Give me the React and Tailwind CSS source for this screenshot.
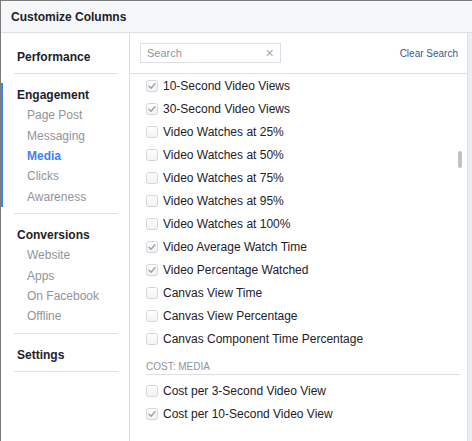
const sections = [
  { title: 'Performance', items: [] },
  { title: 'Engagement', items: ['Page Post', 'Messaging', 'Media', 'Clicks', 'Awareness'], active: true },
  { title: 'Conversions', items: ['Website', 'Apps', 'On Facebook', 'Offline'] },
  { title: 'Settings', items: [] },
];

const columns = [
  { label: '10-Second Video Views', checked: true },
  { label: '30-Second Video Views', checked: true },
  { label: 'Video Watches at 25%', checked: false },
  { label: 'Video Watches at 50%', checked: false },
  { label: 'Video Watches at 75%', checked: false },
  { label: 'Video Watches at 95%', checked: false },
  { label: 'Video Watches at 100%', checked: false },
  { label: 'Video Average Watch Time', checked: true },
  { label: 'Video Percentage Watched', checked: true },
  { label: 'Canvas View Time', checked: false },
  { label: 'Canvas View Percentage', checked: false },
  { label: 'Canvas Component Time Percentage', checked: false },
];

const costColumns = [
  { label: 'Cost per 3-Second Video View', checked: false },
  { label: 'Cost per 10-Second Video View', checked: true },
];

const Checkbox = ({ checked }) => (
  <svg width="12" height="12" viewBox="0 0 12 12" className="shrink-0">
    <defs>
      <linearGradient id="cbg" x1="0" y1="0" x2="0" y2="1">
        <stop offset="0" stopColor="#ffffff" />
        <stop offset="1" stopColor="#f1f2f4" />
      </linearGradient>
    </defs>
    <rect x="0.5" y="0.5" width="11" height="11" rx="2" fill="url(#cbg)" stroke="#d3d6db" />
    {checked && (
      <path d="M3 6.2 L5 8.2 L9 3.8" fill="none" stroke="#9a9ea6" strokeWidth="1.4" strokeLinecap="round" strokeLinejoin="round" />
    )}
  </svg>
);

const ColumnRow = ({ label, checked }) => (
  <div className="flex h-[23px] items-center gap-[5px]">
    <Checkbox checked={checked} />
    <span className="text-[12px] text-[#1d2129]">{label}</span>
  </div>
);

const App = () => {
  return (
    <div
      className="flex h-[441px] w-[472px] flex-col overflow-hidden border-l border-t border-[#7b7b7b] bg-white"
      style={{ fontFamily: '"Liberation Sans", Arial, sans-serif' }}
    >
      <div className="flex h-[32px] shrink-0 items-center border-b border-[#dddfe2] bg-[#f6f7f9] px-[10px]">
        <span className="text-[12px] font-bold text-[#1d2129]">Customize Columns</span>
      </div>

      <div className="flex min-h-0 flex-1">
        {/* Sidebar */}
        <div className="w-[129px] shrink-0 border-r border-[#dddfe2]">
          {sections.map((s, i) => (
            <div key={s.title} className="relative">
              {s.active && <div className="absolute -left-px top-[9px] h-[124px] w-[3px] bg-[#4080ff]" />}
              <div className={`ml-[13px] mr-[11px] border-b border-[#dddfe2] pb-[6px] ${i === 0 ? 'pt-[14px]' : 'pt-[11px]'}`}>
                <div className="flex h-5 items-center pl-[3px] text-[12px] font-bold text-[#1d2129]">{s.title}</div>
                {s.items.map((item) => (
                  <div
                    key={item}
                    className={`flex h-[20.4px] items-center pl-[13px] text-[12px] ${
                      item === 'Media' ? 'font-bold text-[#4080ff]' : 'text-[#90949c]'
                    }`}
                  >
                    {item}
                  </div>
                ))}
              </div>
            </div>
          ))}
        </div>

        {/* Main */}
        <div className="relative flex min-w-0 flex-1 flex-col border-r border-[#dddfe2]">
          <div className="flex h-[41px] shrink-0 items-center justify-between border-b border-[#dddfe2] pl-[10px] pr-[9px]">
            <div className="flex h-[20px] w-[141px] items-center justify-between border border-[#dddfe2] px-[6px]">
              <span className="text-[11px] text-[#90949c]">Search</span>
              <span className="text-[11px] leading-none text-[#a8abb1]">✕</span>
            </div>
            <span className="text-[10px] text-[#365899]">Clear Search</span>
          </div>

          <div className="pl-[16px] pr-[7px]">
            {columns.map((c) => (
              <ColumnRow key={c.label} {...c} />
            ))}
            <div className="mt-[9px] border-b border-[#dddfe2] text-[10px] uppercase text-[#90949c]">
              Cost: Media
            </div>
            <div className="pt-[4px]">
              {costColumns.map((c) => (
                <ColumnRow key={c.label} {...c} />
              ))}
            </div>
          </div>

          <div className="absolute right-[5px] top-[118px] h-[17px] w-[4px] rounded-full bg-[#c1c1c1]" />
        </div>

        <div className="w-[4px] shrink-0 bg-[#eceef1]" />
      </div>
    </div>
  );
};

export default App;
